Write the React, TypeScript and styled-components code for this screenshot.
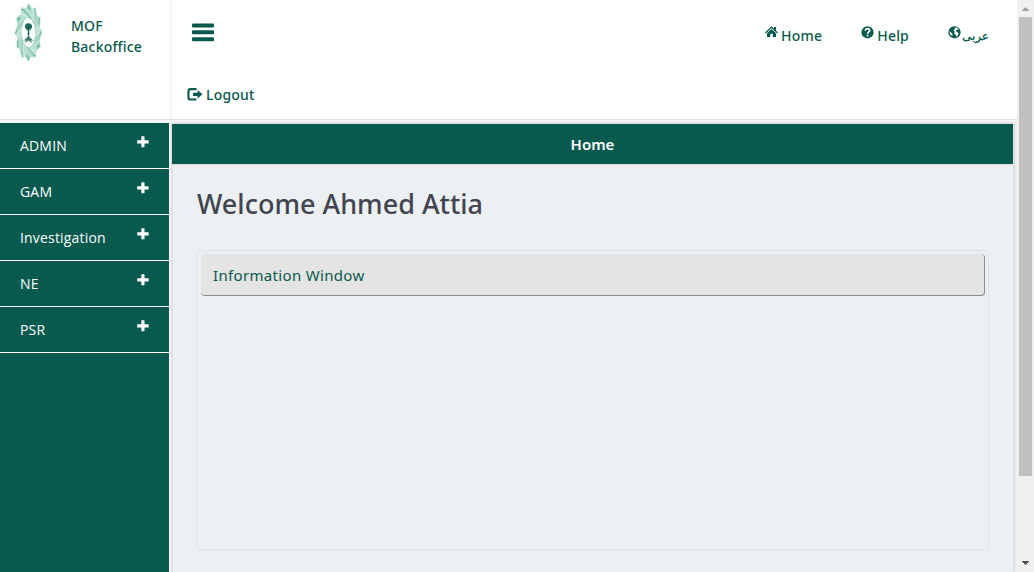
import React from "react";
import styled, { createGlobalStyle } from "styled-components";

const green = "#08594e";

const GlobalStyle = createGlobalStyle`
  * { box-sizing: border-box; }
  html, body { margin: 0; height: 100%; overflow: hidden; }
  body {
    background: #f4f4f4;
    font-family: "Noto Sans", "Open Sans", sans-serif;
    font-size: 14px;
    color: ${green};
  }
`;

const Screen = styled.div`
  display: flex;
  width: 1034px;
  height: 572px;
  overflow: hidden;
`;

const Page = styled.div`
  flex: 1;
  display: flex;
  flex-direction: column;
`;

const Header = styled.header`
  display: flex;
  height: 120px;
  background: #fff;
  border-bottom: 1px solid #e1e1e1;
`;

const Brand = styled.div`
  display: flex;
  align-items: flex-start;
  width: 172px;
  padding: 4px 0 0 15px;
  border-right: 3px solid #f8f8f8;
`;

const BrandName = styled.div`
  margin: 11px 0 0 29px;
  line-height: 21px;
  font-weight: 500;
  letter-spacing: 0.2px;
`;

const HeaderBody = styled.div`
  flex: 1;
  display: flex;
  flex-direction: column;
  justify-content: space-between;
  padding: 23px 28px 12px 15px;
`;

const TopRow = styled.div`
  display: flex;
  justify-content: space-between;
  padding-left: 5px;
`;

const Links = styled.nav`
  display: flex;
  gap: 39px;
`;

const HeaderLink = styled.a`
  display: flex;
  align-items: flex-start;
  gap: 3px;
  height: 24px;
  line-height: 26px;
  font-weight: 500;
  letter-spacing: 0.2px;
  white-space: nowrap;
  & > svg { margin-top: 3px; flex: none; }
`;

const Logout = styled(HeaderLink)`
  line-height: 24px;
  & > svg { margin-top: 5px; }
`;

const Arabic = styled.span`
  width: 27px;
  margin-left: -2px;
  direction: rtl;
  font-family: "DejaVu Sans", sans-serif;
  font-size: 12px;
  letter-spacing: 0;
  -webkit-text-stroke: 0.3px ${green};
`;

const Columns = styled.div`
  flex: 1;
  display: flex;
  align-items: stretch;
  padding-top: 3px;
`;

const Sidebar = styled.aside`
  width: 169px;
  background: ${green};
`;

const MenuItem = styled.a`
  display: flex;
  justify-content: space-between;
  height: 46px;
  padding: 0 20px;
  border-bottom: 1px solid #fff;
  color: #fff;
  font-family: "Open Sans", "Noto Sans", sans-serif;
  letter-spacing: 0.18px;
  line-height: 45px;
  & > svg { margin-top: 13px; }
`;

const Main = styled.main`
  width: 843px;
  margin: 0 1px 0 2px;
  padding-top: 1px;
  background: #ecf0f3;
  border: solid #dfe1e3;
  border-width: 0 1px 0 2px;
  box-shadow: 1px 0 2px rgba(0, 0, 0, 0.12);
`;

const TitleBar = styled.div`
  height: 40px;
  margin: 0 0 0 -1px;
  background: ${green};
  box-shadow: 0 0 1px 1px #dde0e2;
  color: #fff;
  font-size: 15px;
  font-weight: 600;
  line-height: 41px;
  text-align: center;
`;

const Content = styled.section`
  padding: 19px 24px 0 23px;
`;

const Welcome = styled.h1`
  margin: 0 0 25px;
  padding-left: 1px;
  height: 42px;
  line-height: 42px;
  font-size: 27px;
  font-weight: 500;
  color: #42444f;
`;

const Panel = styled.div`
  height: 300px;
  padding: 3px 3px 3px 4px;
  border: 1px solid #e0e4e7;
  border-radius: 4px;
`;

const PanelHeading = styled.div`
  height: 42px;
  padding-left: 12px;
  background: #e4e4e4;
  border-right: 1px solid #8b8d90;
  border-bottom: 1px solid #8b8d90;
  border-radius: 4px;
  font-size: 15px;
  letter-spacing: 0.33px;
  line-height: 42px;
`;

const Scrollbar = styled.div`
  display: flex;
  flex-direction: column;
  align-items: center;
  width: 17px;
  padding: 7px 0 7px;
  background: #f0f0f0;
`;

const ScrollTrack = styled.div`
  flex: 1;
  width: 13px;
  margin: 6px 0;
`;

const Thumb = styled.div`
  height: 459px;
  background: #c1c1c1;
`;

const Arrow = ({ up }: { up?: boolean }) => (
  <svg width="7" height="4" viewBox="0 0 7 4" shapeRendering="crispEdges">
    <path d={up ? "M0 4 3.5 0 7 4Z" : "M0 0H7L3.5 4Z"} fill={up ? "#a3a3a3" : "#505050"} />
  </svg>
);

const Emblem = () => (
  <svg width="27" height="57" viewBox="-50 -50 100 100" preserveAspectRatio="none">
    {Array.from({ length: 12 }, (_, i) => (
      <g key={i} transform={`rotate(${i * 30})`}>
        <path d="M0-51 6-47 14-41 26-12 0-22-16-36-10-42Z" fill={i % 2 ? "#b7dfd3" : "#a2d3c4"} />
        <path d="M-2-49Q14-34 23-6" fill="none" stroke="#64b19a" strokeWidth="2.5" />
        <path d="M-9-42Q6-34 12-22" fill="none" stroke="#d9eee7" strokeWidth="2" />
      </g>
    ))}
    <path d="M0-26 12-22 22-12 25 2 20 16 10 24-2 26-14 20-23 10-25-4-20-16-10-24Z" fill="#fff" />
    <path d="M-14-10Q-10-17 0-16 10-17 14-10L8-5H3V5H-3V-5H-8Z" fill="#1d665a" />
    <path d="m-20 15 14-6 6-5 6 5 14 6-12-2 7 6-15-5-15 5 7-6Z" fill="#3d7d71" />
  </svg>
);

const BarsIcon = () => (
  <svg width="22" height="19" viewBox="0 0 22 19" fill={green}>
    <rect y="0.5" width="22" height="4" rx="1" />
    <rect y="7.3" width="22" height="4" rx="1" />
    <rect y="14.2" width="22" height="4" rx="1" />
  </svg>
);

const HomeIcon = () => (
  <svg width="13" height="12" viewBox="0 0 13 12" fill={green}>
    <path d="M6.5 0.3 9 2.7V1h2v3.6l2 2-.8.8L6.5 1.9.8 7.4 0 6.6Z" />
    <path d="M6.5 3 11 7.3V11H7.8V7.7H5.3V11H2V7.3Z" />
  </svg>
);

const HelpIcon = () => (
  <svg width="13" height="13" viewBox="0 0 13 13">
    <circle cx="6.5" cy="6.3" r="6.1" fill={green} />
    <path d="M4.4 4.7C4.4 1.8 8.8 2.1 8.7 4.6 8.6 6 6.6 6 6.6 7.8" fill="none" stroke="#fff" strokeWidth="1.7" />
    <rect x="5.7" y="8.7" width="1.8" height="1.7" fill="#fff" />
  </svg>
);

const GlobeIcon = () => (
  <svg width="13" height="13" viewBox="0 0 13 13">
    <circle cx="6.5" cy="6.3" r="6.1" fill={green} />
    <path d="M7.6 1.3 9.8 2.3 10.6 3.6 8.7 3.8 7.6 5.1 9.4 6.2 10.8 7.2 9.6 9.6 8 10.8 7.8 8.8 6.3 7.4 6.6 5.4 5.6 4.4 6.6 3Z" fill="#fff" />
    <path d="M1.3 5.3 3 6.6 4.6 8.2 4.3 10 2.4 8.8Z" fill="#fff" />
  </svg>
);

const LogoutIcon = () => (
  <svg width="16" height="14" viewBox="0 0 16 14" fill={green}>
    <path d="M9.5 0v2.2H3.4q-.9 0-.9.8v6.6q0 .8.9.8h6.1v2.2H3.3Q.4 12.6.4 9.8V2.9Q.4 0 3.3 0Z" />
    <path d="M6 4.7h4.5V2.2L15.6 6.3l-5.1 4.1V8H6Z" />
  </svg>
);

const PlusIcon = () => (
  <svg width="12" height="12" viewBox="0 0 12 12" fill="#fff">
    <rect x="4.3" y="0.3" width="3.2" height="11" rx="0.5" />
    <rect x="0.2" y="4.3" width="11.5" height="3.1" rx="0.5" />
  </svg>
);

const menu = ["ADMIN", "GAM", "Investigation", "NE", "PSR"];

export default function App() {
  return (
    <Screen>
      <GlobalStyle />
      <Page>
        <Header>
          <Brand>
            <Emblem />
            <BrandName>MOF<br />Backoffice</BrandName>
          </Brand>
          <HeaderBody>
            <TopRow>
              <BarsIcon />
              <Links>
                <HeaderLink><HomeIcon />Home</HeaderLink>
                <HeaderLink><HelpIcon />Help</HeaderLink>
                <HeaderLink><GlobeIcon /><Arabic lang="ar">عربى</Arabic></HeaderLink>
              </Links>
            </TopRow>
            <Logout><LogoutIcon />Logout</Logout>
          </HeaderBody>
        </Header>
        <Columns>
          <Sidebar>
            {menu.map((label) => (
              <MenuItem key={label}>{label}<PlusIcon /></MenuItem>
            ))}
          </Sidebar>
          <Main>
            <TitleBar>Home</TitleBar>
            <Content>
              <Welcome>Welcome Ahmed Attia</Welcome>
              <Panel>
                <PanelHeading>Information Window</PanelHeading>
              </Panel>
            </Content>
          </Main>
        </Columns>
      </Page>
      <Scrollbar>
        <Arrow up />
        <ScrollTrack><Thumb /></ScrollTrack>
        <Arrow />
      </Scrollbar>
    </Screen>
  );
}
